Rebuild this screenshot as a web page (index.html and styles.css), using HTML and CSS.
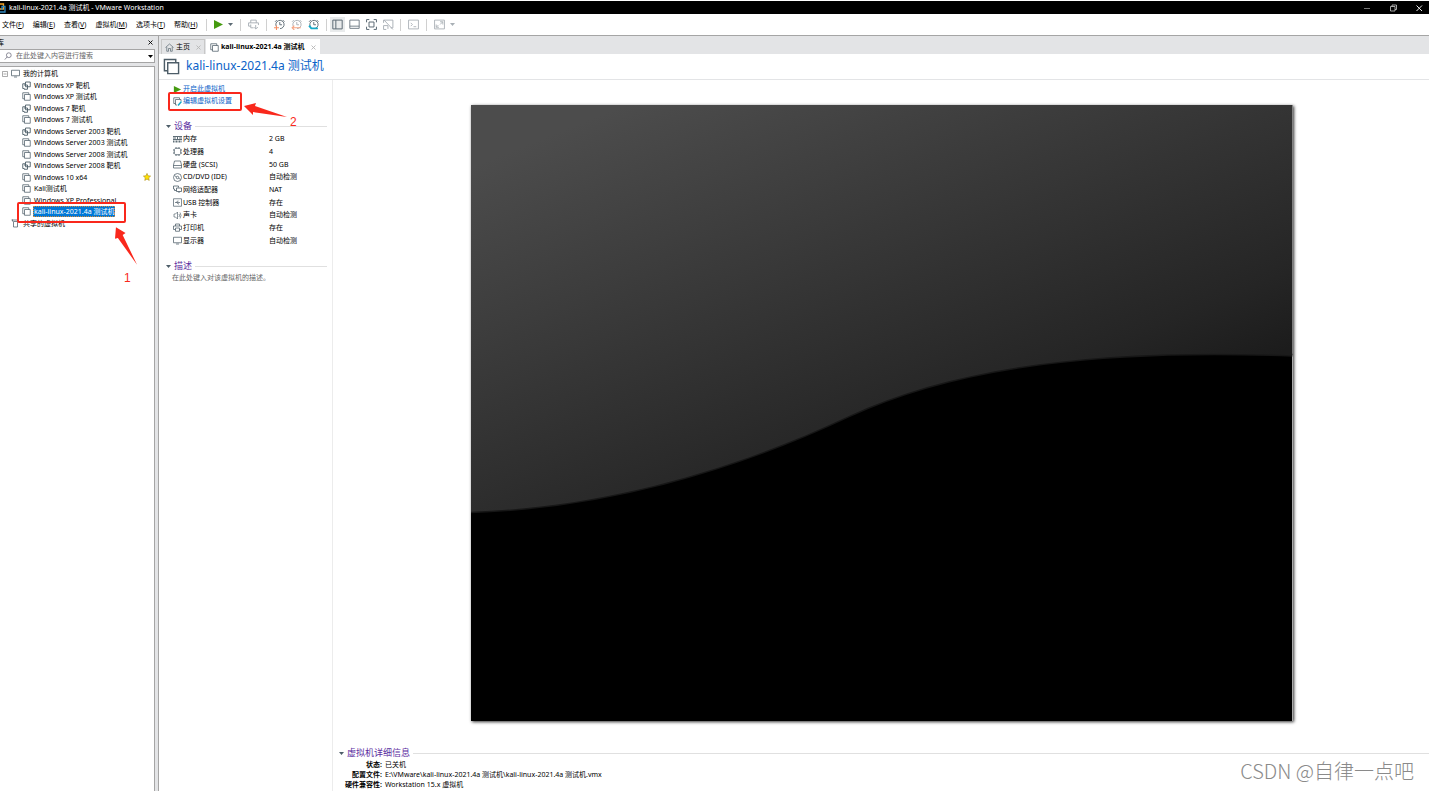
FILE: index.html
```html
<!DOCTYPE html>
<html>
<head>
<meta charset="utf-8">
<title>kali-linux-2021.4a 测试机 - VMware Workstation</title>
<link rel="stylesheet" href="styles.css">
</head>
<body>
<svg class="defs" width="0" height="0" aria-hidden="true">
  <symbol id="vm" viewBox="0 0 18 18"><path d="M5 13.500H1.500V1.500H13.500V5M5 5H16.500V16.500H5Z" fill="none" stroke="currentColor" stroke-width="1.500"/></symbol>
  <symbol id="vmlink" viewBox="0 0 18 18"><path d="M5 15H1.500V5.500H6M7 2H16.500V11.500H7ZM4 8H11V16.500H4" fill="none" stroke="currentColor" stroke-width="1.800"/></symbol>
  <symbol id="monitor" viewBox="0 0 18 18"><path d="M1 2.500H17V13.500H1ZM6 16H12" fill="none" stroke="currentColor" stroke-width="1.500"/></symbol>
  <symbol id="close" viewBox="0 0 10 10"><path d="M1 1L9 9M9 1L1 9" fill="none" stroke="currentColor" stroke-width="1.800"/></symbol>
  <symbol id="caret" viewBox="0 0 10 6"><path d="M0 0H10L5 6Z" fill="currentColor"/></symbol>
  <symbol id="play" viewBox="0 0 10 10"><path d="M0 0L10 5L0 10Z" fill="#459b10"/></symbol>
  <symbol id="clock" viewBox="0 0 20 20"><path d="M4.500 14A7.500 7.500 0 1 1 11 17.500M2 5L5 2M19 5L16 2M10.500 5.500V10.500H14.500" fill="none" stroke="currentColor" stroke-width="1.700"/></symbol>
</svg>
<header class="titlebar">
  <svg class="logo" viewBox="0 0 6 10"><path d="M0 1H3.500V6H0" fill="none" stroke="#f4a023" stroke-width="1.300"/><path d="M0 9H5V3.500H2V7" fill="none" stroke="#2f86bd" stroke-width="1.300"/></svg>
  <h1>kali-linux-2021.4a 测试机 - VMware Workstation</h1>
  <div class="winbtns">
    <button aria-label="最小化"><svg viewBox="0 0 8 8"><path d="M1 4.500H7" stroke="#777"/></svg></button>
    <button aria-label="还原"><svg viewBox="0 0 8 8"><path d="M1.500 2.500H6V7H1.500ZM3 2.500V1H7.500V5.500H6" fill="none" stroke="#ccc" stroke-width=".8"/></svg></button>
    <button aria-label="关闭"><svg viewBox="0 0 8 8"><path d="M1.500 1.500L7 7M7 1.500L1.500 7" stroke="#eee"/></svg></button>
  </div>
</header>
<nav class="menubar">
  <div class="menus">
    <button>文件(<u>F</u>)</button><button>编辑(<u>E</u>)</button><button>查看(<u>V</u>)</button><button>虚拟机(<u>M</u>)</button><button>选项卡(<u>T</u>)</button><button>帮助(<u>H</u>)</button>
  </div>
  <div class="group">
    <button class="power" aria-label="启动"><svg class="i9" viewBox="0 0 10 10"><use href="#play"/></svg><svg class="drop"><use href="#caret"/></svg></button>
  </div>
  <div class="group pale">
    <button aria-label="发送"><svg class="i11" viewBox="0 0 20 20"><path d="M5 7V2H15V7M5 13H1V7H19V11M5 10V16H10M14 11V18M11 15L14 18L18 15" fill="none" stroke="currentColor" stroke-width="1.700"/></svg></button>
  </div>
  <div class="group snaps">
    <button aria-label="拍摄快照"><svg class="i11" viewBox="0 0 20 20"><use href="#clock"/><path d="M0 16H9M4.500 12V20" stroke="#f38e64" stroke-width="2"/></svg></button>
    <button class="pale" aria-label="恢复快照"><svg class="i11" viewBox="0 0 20 20"><use href="#clock"/><path d="M2 16H18M6 12L2 16L6 20" fill="none" stroke="#f5a483" stroke-width="2"/></svg></button>
    <button aria-label="管理快照"><svg class="i11" viewBox="0 0 20 20"><use href="#clock"/><path d="M2 12L6 17H18" fill="none" stroke="#16a9c8" stroke-width="3.500"/></svg></button>
  </div>
  <div class="group views">
    <button class="on" aria-label="库"><svg class="i11" viewBox="0 0 20 20"><path d="M1.500 2H18.500V18H1.500ZM7 2V18" fill="none" stroke="currentColor" stroke-width="1.800"/></svg></button>
    <button aria-label="缩略图栏"><svg class="i11" viewBox="0 0 20 20"><path d="M1.500 2H18.500V17H1.500ZM1.500 13H18.500" fill="none" stroke="currentColor" stroke-width="1.500"/></svg></button>
    <button aria-label="全屏"><svg class="i11" viewBox="0 0 20 20"><path d="M1 6V1H6M14 1H19V6M19 14V19H14M6 19H1V14M5.500 5.500H14.500V14.500H5.500Z" fill="none" stroke="currentColor" stroke-width="1.800"/></svg></button>
    <button class="pale" aria-label="Unity"><svg class="i11" viewBox="0 0 20 20"><path d="M1 7V2H18V16H14M2 2L18 19M6 19H1V12H9V18" fill="none" stroke="currentColor" stroke-width="1.700"/></svg></button>
  </div>
  <div class="group pale">
    <button aria-label="控制台"><svg class="i11" viewBox="0 0 20 20"><path d="M1 2H19V18H1ZM5 7L8 10L5 13M10 14H15" fill="none" stroke="currentColor" stroke-width="1.600"/></svg></button>
  </div>
  <div class="group pale last">
    <button aria-label="拉伸"><svg class="i11" viewBox="0 0 20 20"><path d="M1 2H19V18H1ZM11 5H16V10M16 5L11 10M4 10V15H9M4 15L8 11" fill="none" stroke="currentColor" stroke-width="1.600"/></svg><svg class="drop"><use href="#caret"/></svg></button>
  </div>
</nav>
<div class="workspace">
  <aside class="library">
    <div class="libhead"><h2>库</h2><button aria-label="关闭库"><svg class="i5"><use href="#close"/></svg></button></div>
    <div class="search">
      <svg class="i8" viewBox="0 0 10 10"><circle cx="6" cy="4" r="3" fill="none" stroke="#667" stroke-width=".9"/><path d="M4 6L1 9.500" stroke="#667" stroke-width=".9"/></svg>
      <input type="text" aria-label="搜索" placeholder="在此处键入内容进行搜索">
      <button aria-label="搜索选项"><svg class="drop"><use href="#caret"/></svg></button>
    </div>
    <div class="treebox">
      <ul class="tree">
        <li class="root"><svg class="i6" viewBox="0 0 6 6"><path d="M.5 .5H5.500V5.500H.5ZM1.500 3H4.500" fill="none" stroke="#888" stroke-width=".7"/></svg><svg class="i9"><use href="#monitor"/></svg><span>我的计算机</span></li>
        <li><svg class="i9"><use href="#vmlink"/></svg><span>Windows XP 靶机</span></li>
        <li><svg class="i9"><use href="#vm"/></svg><span>Windows XP 测试机</span></li>
        <li><svg class="i9"><use href="#vmlink"/></svg><span>Windows 7 靶机</span></li>
        <li><svg class="i9"><use href="#vm"/></svg><span>Windows 7 测试机</span></li>
        <li><svg class="i9"><use href="#vmlink"/></svg><span>Windows Server 2003 靶机</span></li>
        <li><svg class="i9"><use href="#vm"/></svg><span>Windows Server 2003 测试机</span></li>
        <li><svg class="i9"><use href="#vm"/></svg><span>Windows Server 2008 测试机</span></li>
        <li><svg class="i9"><use href="#vmlink"/></svg><span>Windows Server 2008 靶机</span></li>
        <li><svg class="i9"><use href="#vm"/></svg><span>Windows 10 x64</span><svg class="star" viewBox="0 0 20 20"><path d="M10 1L12.700 7L19 7.700L14.300 12L15.600 18.500L10 15.200L4.400 18.500L5.700 12L1 7.700L7.300 7Z" fill="#ffe100" stroke="#a88a20" stroke-width="1.500"/></svg></li>
        <li><svg class="i9"><use href="#vm"/></svg><span>Kali测试机</span></li>
        <li><svg class="i9"><use href="#vm"/></svg><span>Windows XP Professional</span></li>
        <li class="selected"><svg class="i9"><use href="#vm"/></svg><span>kali-linux-2021.4a 测试机</span></li>
        <li class="shared"><svg class="i9" viewBox="0 0 18 18"><path d="M3 1V5M1 2H13M5 5H13V16H5Z" fill="none" stroke="currentColor" stroke-width="1.500"/></svg><span>共享的虚拟机</span></li>
      </ul>
      <div class="mark mark1"></div>
      <svg class="arrow arrow1" viewBox="0 0 24 40"><path d="M1 0L11 6L8 8L23 39L3 11L0 12Z" fill="#f9281c"/></svg>
      <span class="num num1">1</span>
    </div>
  </aside>
  <main class="main">
    <div class="tabs">
      <div class="tab"><svg class="i9" viewBox="0 0 18 18"><path d="M1 9L9 2L17 9M3.500 8V16.500H7V11H11V16.500H14.500V8" fill="none" stroke="currentColor" stroke-width="1.300"/></svg><a href="#">主页</a><button aria-label="关闭标签"><svg class="i5"><use href="#close"/></svg></button></div>
      <div class="tab active"><svg class="i9"><use href="#vm"/></svg><a href="#">kali-linux-2021.4a 测试机</a><button aria-label="关闭标签"><svg class="i5"><use href="#close"/></svg></button></div>
    </div>
    <div class="heading"><svg class="i17"><use href="#vm"/></svg><h2>kali-linux-2021.4a 测试机</h2></div>
    <div class="content">
      <section class="summary">
        <div class="actions">
          <a href="#"><svg class="i9" viewBox="0 0 10 10"><path d="M1 1L9 5L1 9Z" fill="#459b10"/></svg>开启此虚拟机</a>
          <a href="#"><svg class="i9" viewBox="0 0 18 18"><path d="M5 13H1.500V1.500H13V4M8 16H5V5H16V8" fill="none" stroke="#4d5d68" stroke-width="1.500"/><path d="M10 17L17 9" stroke="#16a9c8" stroke-width="3"/></svg>编辑虚拟机设置</a>
          <div class="mark mark2"></div>
          <svg class="arrow arrow2" viewBox="0 0 43 14"><path d="M0 3L12 0L11 3L43 14L9 9L9 12Z" fill="#f9281c"/></svg>
          <span class="num num2">2</span>
        </div>
        <h3><svg class="drop"><use href="#caret"/></svg><span>设备</span></h3>
        <dl class="devices">
          <div><dt><svg class="i9" viewBox="0 0 18 18"><path d="M0 3H18V9H0ZM1 11V15M4 11V15M7 11V15M10 11V15M13 11V15M16 11V15M4 4V8M9 4V8M14 4V8" fill="none" stroke="currentColor" stroke-width="1.800"/></svg>内存</dt><dd>2 GB</dd></div>
          <div><dt><svg class="i9" viewBox="0 0 18 18"><path d="M5 2.500H13L15.500 5V13L13 15.500H5L2.500 13V5ZM6 0V3M12 0V3M6 15V18M12 15V18M0 6H3M0 12H3M15 6H18M15 12H18" fill="none" stroke="currentColor" stroke-width="1.600"/></svg>处理器</dt><dd>4</dd></div>
          <div><dt><svg class="i9" viewBox="0 0 18 18"><path d="M1 10L3 2H15L17 10V16H1ZM1 11H17" fill="none" stroke="currentColor" stroke-width="1.500"/></svg>硬盘 (SCSI)</dt><dd>50 GB</dd></div>
          <div><dt><svg class="i9" viewBox="0 0 18 18"><circle cx="9" cy="9" r="8" fill="none" stroke="currentColor" stroke-width="1.500"/><circle cx="9" cy="9" r="2.500" fill="none" stroke="currentColor" stroke-width="1.500"/><path d="M3 5L7 8M11 10L15 13" stroke="currentColor" stroke-width="1.500"/></svg>CD/DVD (IDE)</dt><dd>自动检测</dd></div>
          <div><dt><svg class="i9" viewBox="0 0 18 18"><path d="M3 11V8H1V2H11V5M7 6H17V13H7ZM3 11H7M12 13V16" fill="none" stroke="currentColor" stroke-width="1.600"/></svg>网络适配器</dt><dd>NAT</dd></div>
          <div><dt><svg class="i9" viewBox="0 0 18 18"><path d="M1 1.500H17V16.500H1ZM4 9H14M7 9L9 6H11M8 9L10 12H12" fill="none" stroke="currentColor" stroke-width="1.400"/></svg>USB 控制器</dt><dd>存在</dd></div>
          <div><dt><svg class="i9" viewBox="0 0 18 18"><path d="M2 6H5L9 2V16L5 12H2ZM12 6Q14 9 12 12M14 3Q18 9 14 15" fill="none" stroke="currentColor" stroke-width="1.300"/></svg>声卡</dt><dd>自动检测</dd></div>
          <div><dt><svg class="i9" viewBox="0 0 18 18"><path d="M5 6V2H13V6M5 13H1V6H17V13H13M5 10H13V16.500H5Z" fill="none" stroke="currentColor" stroke-width="1.500"/></svg>打印机</dt><dd>存在</dd></div>
          <div><dt><svg class="i9"><use href="#monitor"/></svg>显示器</dt><dd>自动检测</dd></div>
        </dl>
        <h3><svg class="drop"><use href="#caret"/></svg><span>描述</span></h3>
        <p class="note">在此处键入对该虚拟机的描述。</p>
      </section>
      <section class="console">
        <div class="stage">
          <svg class="screen" viewBox="0 0 824 618" preserveAspectRatio="none" role="img" aria-label="虚拟机屏幕">
            <defs><linearGradient id="shade" gradientUnits="userSpaceOnUse" x1="80" y1="30" x2="256" y2="470"><stop offset="0" stop-color="#4c4c4c"/><stop offset=".85" stop-color="#252525"/><stop offset="1" stop-color="#1c1c1c"/></linearGradient></defs>
            <rect width="824" height="618" fill="#000"/>
            <path d="M0 408C130 404 260 368 379 312C490 260 640 244 824 251" fill="none" stroke="#161616" stroke-width="3"/>
            <path d="M0 0H824V251C640 244 490 260 379 312C260 368 130 404 0 408Z" fill="url(#shade)"/>
          </svg>
        </div>
        <div class="details">
          <h3><svg class="drop"><use href="#caret"/></svg><span>虚拟机详细信息</span></h3>
          <dl>
            <dt>状态:</dt><dd>已关机</dd>
            <dt>配置文件:</dt><dd>E:\VMware\kali-linux-2021.4a 测试机\kali-linux-2021.4a 测试机.vmx</dd>
            <dt>硬件兼容性:</dt><dd>Workstation 15.x 虚拟机</dd>
          </dl>
        </div>
      </section>
    </div>
  </main>
</div>
<div class="watermark">CSDN @自律一点吧</div>
</body>
</html>
```
FILE: styles.css
```css
* { box-sizing: border-box; margin: 0; padding: 0; }
body {
  height: 100vh; overflow: hidden; display: flex; flex-direction: column;
  background: #fff; color: #000; padding-top: 1px; position: relative;
  font: 7px/12px "Noto Sans", "Noto Sans CJK SC", sans-serif;
}
button, input { font: inherit; color: inherit; border: 0; background: none; }
button { display: flex; align-items: center; white-space: nowrap; }
a { color: inherit; text-decoration: none; }
ul { list-style: none; }
svg { flex: none; display: block; }
.defs { position: absolute; }
.drop { width: 5px; height: 3px; }
.i5 { width: 5px; height: 5px; }
.i6 { width: 6px; height: 6px; }
.i8 { width: 8px; height: 8px; }
.i9 { width: 9px; height: 9px; color: #4d5d68; }
.i11 { width: 11px; height: 11px; }
.i17 { width: 17px; height: 17px; color: #4d5d68; }

.titlebar { display: flex; align-items: center; height: 13px; background: #000; color: #fff; }
.logo { width: 6px; height: 10px; }
.titlebar h1 { font-size: 7px; font-weight: 400; margin-left: 3px; }
.winbtns { margin-left: auto; display: flex; gap: 18px; padding-right: 6px; }
.winbtns svg { width: 8px; height: 8px; }

.menubar { display: flex; align-items: center; height: 22px; border-bottom: 1px solid #a5a5a5; }
.menus { display: flex; gap: 9px; padding-left: 2px; margin-right: 8px; }
.group { display: flex; align-items: center; gap: 6px; height: 12px; padding: 0 7px; border-left: 1px solid #d0d0d0; color: #5c6a74; }
.power, .last button { gap: 5px; }
.pale { color: #a8afb5; }
.views { padding: 0 6px 0 5px; }
.on { background: #e9ebec; outline: 2px solid #e9ebec; }

.workspace { flex: 1; display: flex; min-height: 0; }
.library { width: 159px; display: flex; flex-direction: column; background: #e3e4e6; border-right: 1px solid #a5a5a5; }
.libhead { display: flex; align-items: center; justify-content: space-between; height: 13px; padding-right: 5px; }
.libhead h2 { font-size: 7px; font-weight: 400; margin-left: -3px; }
.search { display: flex; align-items: center; height: 14px; background: #fff; border: 1px solid #a5a5a5; border-left: 0; margin-right: 3px; padding: 0 1px 0 4px; }
.search input { flex: 1; min-width: 0; margin-left: 4px; outline: 0; }
.search input::placeholder { color: #666; opacity: 1; }
.treebox { position: relative; flex: 1; margin: 3px 3px 0 0; padding-top: 1px; background: #fff; border: 1px solid #a5a5a5; border-left: 0; border-bottom: 0; }
.tree { display: grid; grid-auto-rows: 1fr; height: 161px; }
.tree li { display: flex; align-items: center; gap: 2px; padding-left: 22px; min-height: 0; }
.tree span { line-height: 11px; padding: 0 1px; white-space: nowrap; }
.tree .root { padding-left: 2px; gap: 3px; }
.tree .root span { padding: 0; }
.tree .shared { padding-left: 11px; }
.selected span { background: #0078d7; color: #fff; outline: 1px dotted #d88b3c; outline-offset: -1px; }
.star { width: 8px; height: 8px; margin: 0 3px 0 auto; }

.mark { position: absolute; border: 2px solid #f9281c; border-radius: 2px; }
.arrow, .num { position: absolute; }
.num { color: #f9281c; font: 12px/14px "Liberation Sans", sans-serif; }
.mark1 { left: 17px; top: 135px; width: 109px; height: 21px; }
.arrow1 { left: 115px; top: 160px; width: 23px; height: 39px; }
.num1 { left: 124px; top: 204px; }
.mark2 { left: 9px; top: 12px; width: 74px; height: 19px; }
.arrow2 { left: 85px; top: 23px; width: 43px; height: 14px; }
.num2 { left: 131px; top: 35px; }

.main { flex: 1; min-width: 0; display: flex; flex-direction: column; }
.tabs { display: flex; align-items: flex-end; gap: 1px; height: 18px; padding-left: 2px; background: #e3e4e6; }
.tab { display: flex; align-items: center; gap: 2px; height: 15px; padding: 0 3px; border: 1px solid #c8c8c8; border-bottom: 0; }
.tab button { color: #b5b5b5; margin-left: 4px; }
.tab.active { background: #fff; border-color: #fff; font-weight: 700; }
.heading { display: flex; align-items: center; gap: 6px; height: 26px; padding: 0 0 1px 4px; border-bottom: 1px solid #e3e4e6; }
.heading h2 { font-size: 12px; line-height: 18px; font-weight: 400; color: #0a62c8; }
.content { flex: 1; display: flex; min-height: 0; }
.summary { width: 174px; border-right: 1px solid #ececec; }
.actions { position: relative; padding: 3px 0 0 14px; height: 39px; }
.actions a { display: flex; align-items: center; gap: 1px; color: #0a62c8; }
h3 { display: flex; align-items: center; gap: 3px; margin: 0 5px 0 7px; font-size: 9px; line-height: 14px; font-weight: 400; color: #5a2ca0; }
h3 svg { color: #4d5d68; }
h3::after { content: ""; flex: 1; height: 1px; background: #e0e0e0; }
.devices { display: grid; grid-auto-rows: 1fr; height: 114px; padding-left: 14px; margin-bottom: 12px; }
.devices div { display: grid; grid-template-columns: 96px 1fr; align-items: center; }
.devices dt { display: flex; align-items: center; gap: 1px; }
.note { padding-left: 13px; color: #666; line-height: 10px; }
.console { flex: 1; min-width: 0; display: flex; flex-direction: column; }
.stage { flex: 1; min-height: 0; padding: 25px 0 25px 2px; display: flex; justify-content: center; }
.screen { height: 100%; aspect-ratio: 4 / 3; box-shadow: 1px 1px 3px #333; }
.details { padding-bottom: 1px; }
.details h3 { margin: 0 0 0 6px; }
.details dl { display: grid; grid-template-columns: 49px 1fr; column-gap: 3px; line-height: 10px; }
.details dt { text-align: right; font-weight: 700; }
.watermark { position: absolute; right: 15px; bottom: 8px; color: #8a8a8a; font: 300 20px/24px "Noto Sans CJK SC", sans-serif; }
```
